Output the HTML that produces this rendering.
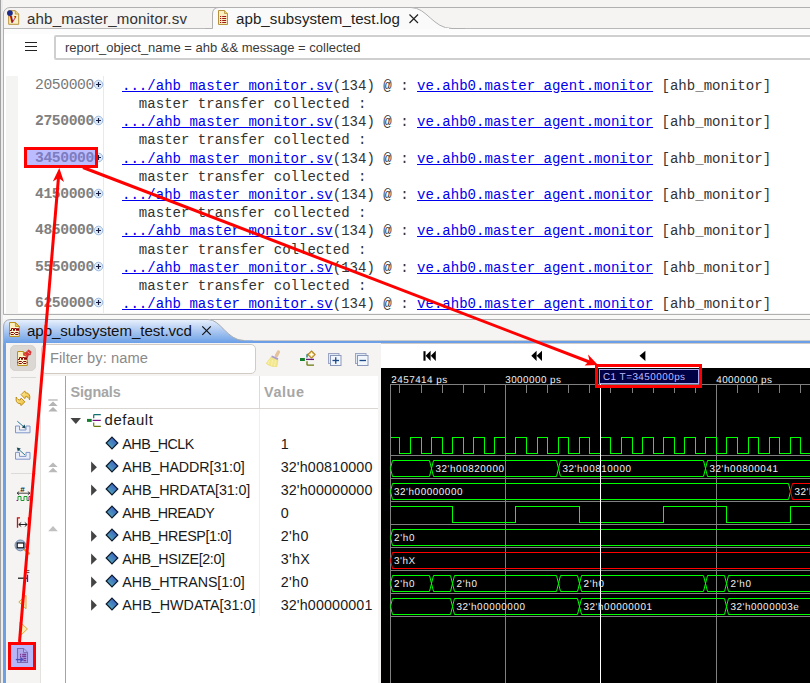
<!DOCTYPE html><html><head><meta charset="utf-8"><style>
html,body{margin:0;padding:0;}
body{width:810px;height:683px;overflow:hidden;background:#f5f4f2;font-family:"Liberation Sans", sans-serif;position:relative;}
.abs{position:absolute;}
.t{position:absolute;white-space:pre;line-height:1;}
.log{position:absolute;white-space:pre;font-family:"Liberation Mono", monospace;font-size:14.05px;line-height:18px;color:#333;}
.log u{color:#0000ee;text-decoration:underline;text-underline-offset:1px;}
.ts{position:absolute;white-space:pre;font-family:"Liberation Mono", monospace;font-size:14.7px;letter-spacing:-0.39px;font-weight:bold;color:#808080;line-height:18px;}
.sig{position:absolute;white-space:pre;font-size:14.6px;color:#1a1a1a;line-height:1;}
</style></head><body><div class="abs" style="left:0;top:0;width:1px;height:683px;background:#a2a2a2"></div>
<div class="abs" style="left:1px;top:0;width:2px;height:683px;background:#ececec"></div>
<div class="abs" style="left:3px;top:7px;width:820px;height:308px;border:1px solid #b0b0b0;border-radius:7px 0 0 0;background:#f5f4f2;box-sizing:border-box"></div>
<div class="abs" style="left:4px;top:29px;width:806px;height:284px;background:#fff"></div>
<div class="abs" style="left:4px;top:28px;width:806px;height:1px;background:#b9b9b9"></div>
<svg class="abs" style="left:205px;top:6px" width="260" height="24" viewBox="0 0 260 24">
<path d="M7.5 23.5 L7.5 8 Q7.5 1.5 14 1.5 L206 1.5 C222 1.5 228 22.5 247 22.5 L260 22.5 L260 24 L7.5 24 Z" fill="#fafafa"/>
<path d="M0 22.5 L7.5 22.5 L7.5 8 Q7.5 1.5 14 1.5 L206 1.5 C222 1.5 228 22.5 247 22.5 L260 22.5" fill="none" stroke="#b0b0b0" stroke-width="1"/>
</svg>
<div class="abs" style="left:213px;top:28px;width:236px;height:1px;background:#fafafa"></div>
<div class="abs" style="left:4px;top:29px;width:806px;height:5px;background:#fcfcfc"></div>
<div class="t" style="left:27px;top:10.5px;font-size:15.1px;letter-spacing:0.152px;color:#333;font-weight:normal;">ahb_master_monitor.sv</div>
<div class="t" style="left:236px;top:10.5px;font-size:15.1px;letter-spacing:0.055px;color:#222;font-weight:normal;">apb_subsystem_test.log</div>
<svg class="abs" style="left:408px;top:13px" width="12" height="12"><path d="M1.5 1.5 L10 10 M10 1.5 L1.5 10" stroke="#222" stroke-width="1.2" fill="none"/></svg>
<svg class="abs" style="left:6px;top:9px" width="16" height="18" viewBox="0 0 16 18">
<path d="M2.7 1.7 L9.3 1.7 L12.7 5.1 L12.7 15.3 L2.7 15.3 Z" fill="#fbf0c4" stroke="#b8923a" stroke-width="1"/>
<path d="M9.3 1.7 L9.3 5.1 L12.7 5.1" fill="#e8d28a" stroke="#b8923a" stroke-width="0.8"/>
<text x="3.4" y="13.6" font-family="Liberation Serif" font-style="italic" font-weight="bold" font-size="14.5" fill="#a01010">v</text>
<circle cx="3.9" cy="4.1" r="2.9" fill="#1c2a8c"/>
</svg>
<svg class="abs" style="left:215px;top:9px" width="16" height="18" viewBox="0 0 16 18">
<path d="M3.5 1.5 L9.5 1.5 L12.5 4.5 L12.5 15.5 L3.5 15.5 Z" fill="#fbf0c4" stroke="#b8923a" stroke-width="1"/>
<path d="M9.5 1.5 L9.5 4.5 L12.5 4.5" fill="#e8d28a" stroke="#b8923a" stroke-width="0.8"/>
<path d="M5 7.5h1.2M7.2 7.5h4M5 9.5h1.2M7.2 9.5h4M5 11.5h1.2M7.2 11.5h4M5 13.5h1.2M7.2 13.5h4" stroke="#a01818" stroke-width="1.1"/>
</svg>
<div class="abs" style="left:25px;top:42px;width:12px;height:1.4px;background:#222"></div>
<div class="abs" style="left:25px;top:46px;width:12px;height:1.4px;background:#222"></div>
<div class="abs" style="left:25px;top:50px;width:12px;height:1.4px;background:#222"></div>
<div class="abs" style="left:53.8px;top:34.7px;width:780px;height:25.4px;border:2px solid #cfcfcf;border-radius:2px;background:#fff;box-sizing:border-box"></div>
<div class="t" style="left:65px;top:41px;font-size:13px;color:#3a3a3a">report_object_name = ahb &amp;&amp; message = collected</div>
<div class="abs" style="left:5.5px;top:76px;width:12.5px;height:237px;background:#f4f4f2"></div>
<div class="abs" style="left:103px;top:76px;width:1px;height:237px;background:#e9e9e9"></div>
<div class="ts" style="left:35px;top:75.80px;font-weight:normal;color:#787878">2050000</div>
<svg class="abs" style="left:93px;top:79px" width="11" height="11"><circle cx="5.5" cy="5.5" r="4.3" fill="#deeaf8" stroke="#9dbbe0" stroke-width="1"/><path d="M3 5.5h5M5.5 3v5" stroke="#141c40" stroke-width="1.15"/></svg>
<div class="log" style="left:122px;top:76.70px"><u>.../ahb_master_monitor.sv</u>(134) @ : <u>ve.ahb0.master_agent.monitor</u> [ahb_monitor]</div>
<div class="log" style="left:122px;top:94.90px">  master transfer collected :</div>
<div class="ts" style="left:35px;top:112.20px">2750000</div>
<svg class="abs" style="left:93px;top:115px" width="11" height="11"><circle cx="5.5" cy="5.5" r="4.3" fill="#deeaf8" stroke="#9dbbe0" stroke-width="1"/><path d="M3 5.5h5M5.5 3v5" stroke="#141c40" stroke-width="1.15"/></svg>
<div class="log" style="left:122px;top:113.10px"><u>.../ahb_master_monitor.sv</u>(134) @ : <u>ve.ahb0.master_agent.monitor</u> [ahb_monitor]</div>
<div class="log" style="left:122px;top:131.30px">  master transfer collected :</div>
<div class="ts" style="left:35px;top:148.60px">3450000</div>
<svg class="abs" style="left:93px;top:152px" width="11" height="11"><circle cx="5.5" cy="5.5" r="4.3" fill="#deeaf8" stroke="#9dbbe0" stroke-width="1"/><path d="M3 5.5h5M5.5 3v5" stroke="#141c40" stroke-width="1.15"/></svg>
<div class="log" style="left:122px;top:149.50px"><u>.../ahb_master_monitor.sv</u>(134) @ : <u>ve.ahb0.master_agent.monitor</u> [ahb_monitor]</div>
<div class="log" style="left:122px;top:167.70px">  master transfer collected :</div>
<div class="ts" style="left:35px;top:185.00px">4150000</div>
<svg class="abs" style="left:93px;top:188px" width="11" height="11"><circle cx="5.5" cy="5.5" r="4.3" fill="#deeaf8" stroke="#9dbbe0" stroke-width="1"/><path d="M3 5.5h5M5.5 3v5" stroke="#141c40" stroke-width="1.15"/></svg>
<div class="log" style="left:122px;top:185.90px"><u>.../ahb_master_monitor.sv</u>(134) @ : <u>ve.ahb0.master_agent.monitor</u> [ahb_monitor]</div>
<div class="log" style="left:122px;top:204.10px">  master transfer collected :</div>
<div class="ts" style="left:35px;top:221.40px">4850000</div>
<svg class="abs" style="left:93px;top:225px" width="11" height="11"><circle cx="5.5" cy="5.5" r="4.3" fill="#deeaf8" stroke="#9dbbe0" stroke-width="1"/><path d="M3 5.5h5M5.5 3v5" stroke="#141c40" stroke-width="1.15"/></svg>
<div class="log" style="left:122px;top:222.30px"><u>.../ahb_master_monitor.sv</u>(134) @ : <u>ve.ahb0.master_agent.monitor</u> [ahb_monitor]</div>
<div class="log" style="left:122px;top:240.50px">  master transfer collected :</div>
<div class="ts" style="left:35px;top:257.80px">5550000</div>
<svg class="abs" style="left:93px;top:261px" width="11" height="11"><circle cx="5.5" cy="5.5" r="4.3" fill="#deeaf8" stroke="#9dbbe0" stroke-width="1"/><path d="M3 5.5h5M5.5 3v5" stroke="#141c40" stroke-width="1.15"/></svg>
<div class="log" style="left:122px;top:258.70px"><u>.../ahb_master_monitor.sv</u>(134) @ : <u>ve.ahb0.master_agent.monitor</u> [ahb_monitor]</div>
<div class="log" style="left:122px;top:276.90px">  master transfer collected :</div>
<div class="ts" style="left:35px;top:294.20px">6250000</div>
<svg class="abs" style="left:93px;top:297px" width="11" height="11"><circle cx="5.5" cy="5.5" r="4.3" fill="#deeaf8" stroke="#9dbbe0" stroke-width="1"/><path d="M3 5.5h5M5.5 3v5" stroke="#141c40" stroke-width="1.15"/></svg>
<div class="log" style="left:122px;top:295.10px"><u>.../ahb_master_monitor.sv</u>(134) @ : <u>ve.ahb0.master_agent.monitor</u> [ahb_monitor]</div>
<div class="abs" style="left:3px;top:315px;width:820px;height:4px;background:#f9f9f8"></div><div class="abs" style="left:210px;top:319px;width:620px;height:1px;background:#b0b0b0"></div>
<div class="abs" style="left:3px;top:326px;width:3px;height:360px;background:linear-gradient(#a9c6ef 0,#6f9fe3 20px,#6f9fe3 100%)"></div>
<div class="abs" style="left:4px;top:340px;width:806px;height:1px;background:#c9c9c9"></div>
<div class="abs" style="left:4px;top:340.9px;width:806px;height:2.4px;background:#6ba0e8"></div>
<svg class="abs" style="left:3px;top:318px" width="250" height="26" viewBox="0 0 250 26">
<defs><linearGradient id="tg" x1="0" y1="0" x2="0" y2="1"><stop offset="0" stop-color="#eaf1fc"/><stop offset="0.35" stop-color="#bcd3f4"/><stop offset="1" stop-color="#6b9fe6"/></linearGradient></defs>
<path d="M0.5 25 L0.5 9 Q0.5 1.5 8 1.5 L205 1.5 C218 1.5 224 22.5 241 22.5 L250 22.5 L250 25 Z" fill="url(#tg)"/>
<path d="M0.5 25 L0.5 9 Q0.5 1.5 8 1.5 L205 1.5 C218 1.5 224 22.5 241 22.5" fill="none" stroke="#a6a9ae" stroke-width="1"/>
</svg>
<div class="t" style="left:27px;top:322.92px;font-size:15.1px;letter-spacing:-0.057px;color:#111;font-weight:normal">apb_subsystem_test.vcd</div>
<svg class="abs" style="left:201px;top:325px" width="12" height="12"><path d="M1.3 1.3 L9.8 9.8 M9.8 1.3 L1.3 9.8" stroke="#111" stroke-width="1.2" fill="none"/></svg>
<div class="abs" style="left:6px;top:343px;width:375px;height:340px;background:#f5f4f2"></div>
<div class="abs" style="left:381px;top:343px;width:429px;height:25px;background:#fff"></div>
<div class="abs" style="left:10px;top:345px;width:26px;height:26px;border-radius:5px;background:#dbd7d3;border:1px solid #d6d2ce;box-sizing:border-box"></div>
<svg class="abs" style="left:0;top:316px" width="40" height="60" viewBox="0 316 40 60"><g transform="translate(0 0)">
<path d="M9.6 322.6 H15.4 L19.3 326.5 V336.4 H9.6 Z" fill="#fffbd2" stroke="#b8860b" stroke-width="1"/>
<path d="M10.6 323.6 H14.4 V327.2 H10.6 Z" fill="#fdeec0"/>
<path d="M15.4 322.6 V326.5 H19.3 Z" fill="#e8c860" stroke="#b8860b" stroke-width="0.8"/>
<path d="M10 330.5 H11.5 V328.5 H13.5 V330.5 H14.5 V328.5 H16.5 V330.5 H17.5 V328.5 H18.5 V330.5 H19" fill="none" stroke="#8b0000" stroke-width="1"/>
<path d="M10 333.5 L11 332.5 H13.5 L14.5 333.5 L13.5 334.5 H11 Z M14.5 333.5 L15.5 332.5 H18 L19 333.5 L18 334.5 H15.5 Z" fill="none" stroke="#8b0000" stroke-width="1"/>
</g><g transform="translate(8 29)">
<path d="M9.6 322.6 H15.4 L19.3 326.5 V336.4 H9.6 Z" fill="#fffbd2" stroke="#b8860b" stroke-width="1"/>
<path d="M10.6 323.6 H14.4 V327.2 H10.6 Z" fill="#fdeec0"/>
<path d="M15.4 322.6 V326.5 H19.3 Z" fill="#e8c860" stroke="#b8860b" stroke-width="0.8"/>
<path d="M10 330.5 H11.5 V328.5 H13.5 V330.5 H14.5 V328.5 H16.5 V330.5 H17.5 V328.5 H18.5 V330.5 H19" fill="none" stroke="#8b0000" stroke-width="1"/>
<path d="M10 333.5 L11 332.5 H13.5 L14.5 333.5 L13.5 334.5 H11 Z M14.5 333.5 L15.5 332.5 H18 L19 333.5 L18 334.5 H15.5 Z" fill="none" stroke="#8b0000" stroke-width="1"/>
</g><path d="M23.3 354 L27.4 357.8 L28.5 354.9 L30.3 355 L31.2 351.7 L28.5 349.8 L26.7 351.7 Z" fill="#dc3434" stroke="#c02020" stroke-width="0.5"/>
<path d="M27.6 351.8 L29.8 353.6" stroke="#f6a0a0" stroke-width="0.9"/><path d="M24.6 354 L26.6 355.8" stroke="#f08080" stroke-width="0.8"/></svg>
<div class="abs" style="left:41px;top:344px;width:215px;height:30px;border:1px solid #d2cbc4;border-radius:5px;background:#fff;box-sizing:border-box"></div>
<div class="t" style="left:50px;top:351.16px;font-size:14.7px;letter-spacing:0.056px;color:#8a8a8a;font-weight:normal">Filter by: name</div>
<div class="abs" style="left:11px;top:377px;width:25px;height:1px;background:#dcdad7"></div>
<div class="abs" style="left:11px;top:473px;width:25px;height:1px;background:#dcdad7"></div>
<div class="abs" style="left:41px;top:376px;width:337px;height:307px;background:#fff"></div><div class="abs" style="left:40px;top:376px;width:1px;height:307px;background:#e4e2df"></div>
<div class="abs" style="left:65px;top:376px;width:1px;height:307px;background:#a4a4a4"></div>
<div class="abs" style="left:259px;top:376px;width:1px;height:33px;background:#dcdcdc"></div>
<div class="abs" style="left:259px;top:409px;width:1px;height:207px;background:#efefef"></div>
<div class="abs" style="left:66px;top:408px;width:312px;height:1px;background:#dad6d2"></div>

<div class="t" style="left:70.5px;top:385.31px;font-size:14.4px;letter-spacing:-0.169px;color:#a6a6a6;font-weight:bold">Signals</div>
<div class="t" style="left:264px;top:385.31px;font-size:14.4px;letter-spacing:0.594px;color:#a6a6a6;font-weight:bold">Value</div>
<svg class="abs" style="left:46px;top:398.4px" width="14" height="16" viewBox="0 0 14 16">
<path d="M2.3 2 h9.4" stroke="#b4b4b4" stroke-width="1.3"/><path d="M7 3.5 L11.7 8 L2.3 8 Z M7 9 L11.7 13.5 L2.3 13.5 Z" fill="#b4b4b4"/></svg>
<svg class="abs" style="left:46px;top:461.3px" width="14" height="14" viewBox="0 0 14 14">
<path d="M7 1.5 L11.7 6 L2.3 6 Z M7 6.8 L11.7 11.3 L2.3 11.3 Z" fill="#bababa"/></svg>
<svg class="abs" style="left:46px;top:524px" width="14" height="10" viewBox="0 0 14 10">
<path d="M7 2 L11.8 7.2 L2.2 7.2 Z" fill="#c0c0c0"/></svg>
<svg class="abs" style="left:70px;top:417px" width="12" height="8"><path d="M0.5 1 L11 1 L5.8 7 Z" fill="#444"/></svg>
<svg class="abs" style="left:86px;top:412px" width="17" height="16" viewBox="86 412 17 16">
<rect x="87" y="418.9" width="4.7" height="3" fill="#14802e"/>
<path d="M100.8 414.7 H94.5 Q93.7 414.7 93.7 415.5 V418.3" fill="none" stroke="#107070" stroke-width="1.2"/>
<path d="M92.6 420.4 H100.8" fill="none" stroke="#7a1080" stroke-width="1.2"/>
<path d="M93.7 422.4 V425.6 Q93.7 426.4 94.5 426.4 H100.8" fill="none" stroke="#687808" stroke-width="1.2"/>
</svg>
<div class="t" style="left:104.5px;top:413.39px;font-size:14.9px;letter-spacing:0.611px;color:#1a1a1a;font-weight:normal">default</div>
<svg width="0" height="0" style="position:absolute"><defs><linearGradient id="dg" x1="1" y1="0" x2="0" y2="1"><stop offset="0.2" stop-color="#3c62c4"/><stop offset="0.85" stop-color="#52aab8"/></linearGradient></defs></svg>
<svg class="abs" style="left:105px;top:436px" width="14" height="14" viewBox="0 0 14 14"><path d="M7 1.2 L12.8 7 L7 12.8 L1.2 7 Z" fill="url(#dg)" stroke="#0c1a2c" stroke-width="1.2"/></svg>
<div class="t" style="left:122.3px;top:436.5px;font-size:14.3px;letter-spacing:-0.500px;color:#1a1a1a;font-weight:normal">AHB_HCLK</div>
<div class="sig" style="left:280.7px;top:436.50px;font-size:14.3px">1</div>
<svg class="abs" style="left:90px;top:461px" width="8" height="13"><path d="M1.1 0.6 L6.9 6.2 L1.1 11.8 Z" fill="#444"/></svg>
<svg class="abs" style="left:105px;top:459px" width="14" height="14" viewBox="0 0 14 14"><path d="M7 1.2 L12.8 7 L7 12.8 L1.2 7 Z" fill="url(#dg)" stroke="#0c1a2c" stroke-width="1.2"/></svg>
<div class="t" style="left:122.3px;top:459.5px;font-size:14.3px;letter-spacing:-0.106px;color:#1a1a1a;font-weight:normal">AHB_HADDR[31:0]</div>
<div class="t" style="left:280.7px;top:459.5px;font-size:14.3px;letter-spacing:0.135px;color:#1a1a1a;font-weight:normal">32'h00810000</div>
<svg class="abs" style="left:90px;top:484px" width="8" height="13"><path d="M1.1 0.6 L6.9 6.2 L1.1 11.8 Z" fill="#444"/></svg>
<svg class="abs" style="left:105px;top:482px" width="14" height="14" viewBox="0 0 14 14"><path d="M7 1.2 L12.8 7 L7 12.8 L1.2 7 Z" fill="url(#dg)" stroke="#0c1a2c" stroke-width="1.2"/></svg>
<div class="t" style="left:122.3px;top:482.5px;font-size:14.3px;letter-spacing:-0.120px;color:#1a1a1a;font-weight:normal">AHB_HRDATA[31:0]</div>
<div class="t" style="left:280.7px;top:482.5px;font-size:14.3px;letter-spacing:0.135px;color:#1a1a1a;font-weight:normal">32'h00000000</div>
<svg class="abs" style="left:105px;top:505px" width="14" height="14" viewBox="0 0 14 14"><path d="M7 1.2 L12.8 7 L7 12.8 L1.2 7 Z" fill="url(#dg)" stroke="#0c1a2c" stroke-width="1.2"/></svg>
<div class="t" style="left:122.3px;top:505.5px;font-size:14.3px;letter-spacing:-0.495px;color:#1a1a1a;font-weight:normal">AHB_HREADY</div>
<div class="sig" style="left:280.7px;top:505.50px;font-size:14.3px">0</div>
<svg class="abs" style="left:90px;top:530px" width="8" height="13"><path d="M1.1 0.6 L6.9 6.2 L1.1 11.8 Z" fill="#444"/></svg>
<svg class="abs" style="left:105px;top:528px" width="14" height="14" viewBox="0 0 14 14"><path d="M7 1.2 L12.8 7 L7 12.8 L1.2 7 Z" fill="url(#dg)" stroke="#0c1a2c" stroke-width="1.2"/></svg>
<div class="t" style="left:122.3px;top:528.5px;font-size:14.3px;letter-spacing:-0.381px;color:#1a1a1a;font-weight:normal">AHB_HRESP[1:0]</div>
<div class="t" style="left:280.7px;top:528.5px;font-size:14.3px;letter-spacing:0.370px;color:#1a1a1a;font-weight:normal">2'h0</div>
<svg class="abs" style="left:90px;top:553px" width="8" height="13"><path d="M1.1 0.6 L6.9 6.2 L1.1 11.8 Z" fill="#444"/></svg>
<svg class="abs" style="left:105px;top:551px" width="14" height="14" viewBox="0 0 14 14"><path d="M7 1.2 L12.8 7 L7 12.8 L1.2 7 Z" fill="url(#dg)" stroke="#0c1a2c" stroke-width="1.2"/></svg>
<div class="t" style="left:122.3px;top:551.5px;font-size:14.3px;letter-spacing:-0.346px;color:#1a1a1a;font-weight:normal">AHB_HSIZE[2:0]</div>
<div class="t" style="left:280.7px;top:551.5px;font-size:14.3px;letter-spacing:0.342px;color:#1a1a1a;font-weight:normal">3'hX</div>
<svg class="abs" style="left:90px;top:576px" width="8" height="13"><path d="M1.1 0.6 L6.9 6.2 L1.1 11.8 Z" fill="#444"/></svg>
<svg class="abs" style="left:105px;top:574px" width="14" height="14" viewBox="0 0 14 14"><path d="M7 1.2 L12.8 7 L7 12.8 L1.2 7 Z" fill="url(#dg)" stroke="#0c1a2c" stroke-width="1.2"/></svg>
<div class="t" style="left:122.3px;top:574.5px;font-size:14.3px;letter-spacing:-0.105px;color:#1a1a1a;font-weight:normal">AHB_HTRANS[1:0]</div>
<div class="t" style="left:280.7px;top:574.5px;font-size:14.3px;letter-spacing:0.370px;color:#1a1a1a;font-weight:normal">2'h0</div>
<svg class="abs" style="left:90px;top:599px" width="8" height="13"><path d="M1.1 0.6 L6.9 6.2 L1.1 11.8 Z" fill="#444"/></svg>
<svg class="abs" style="left:105px;top:597px" width="14" height="14" viewBox="0 0 14 14"><path d="M7 1.2 L12.8 7 L7 12.8 L1.2 7 Z" fill="url(#dg)" stroke="#0c1a2c" stroke-width="1.2"/></svg>
<div class="t" style="left:122.3px;top:597.5px;font-size:14.3px;letter-spacing:0.015px;color:#1a1a1a;font-weight:normal">AHB_HWDATA[31:0]</div>
<div class="t" style="left:280.7px;top:597.5px;font-size:14.3px;letter-spacing:0.135px;color:#1a1a1a;font-weight:normal">32'h00000001</div>
<svg class="abs" style="left:0;top:340px" width="381" height="343" viewBox="0 340 381 343">
<path d="M278.4 351.9 L276.4 355.8" stroke="#e4c29a" stroke-width="3.3" stroke-linecap="round"/>
<path d="M271.2 357 L277.9 359.9 L276.9 366.5 Q270.5 367 266.2 363.4 Z" fill="#f3e78e" stroke="#ead86a" stroke-width="0.6"/>
<path d="M269.5 360.5 L268 364 M272.5 360 L271.6 365.6 M275.3 360.5 L274.6 366.2" stroke="#fbf4b8" stroke-width="0.8" fill="none"/>
<path d="M271.6 356.3 L278 359.1" stroke="#ab9ccc" stroke-width="1.7"/>
<rect x="300" y="358" width="4.9" height="3" fill="#14802e"/>
<path d="M307 357.4 V355.2 Q307 354.4 307.8 354.4 H309" fill="none" stroke="#107070" stroke-width="1.3"/>
<path d="M306 359.4 H314" stroke="#641a78" stroke-width="1.3"/>
<path d="M307 361.2 V364.4 Q307 365.2 307.8 365.2 H314" fill="none" stroke="#687808" stroke-width="1.3"/>
<path d="M311.5 351 L315.1 354.6 L311.5 358.2 L307.9 354.6 Z" fill="#f4dc98" stroke="#b48a28" stroke-width="1.1"/>
<path d="M309.7 354.6 H313.3 M311.5 352.8 V356.4" stroke="#fffdf0" stroke-width="1"/>
<rect x="328.5" y="353.5" width="10.5" height="10" fill="#dfe9f6" stroke="#9aa6c4" stroke-width="1"/>
<rect x="330.5" y="355.5" width="10.5" height="10" fill="#f1f6fc" stroke="#8c98ba" stroke-width="1"/>
<path d="M332.5 360.5 H339" stroke="#1c4a88" stroke-width="1.3"/>
<path d="M335.75 357.2 V363.8" stroke="#1c4a88" stroke-width="1.3"/>
<rect x="355.5" y="353.5" width="10.5" height="10" fill="#dfe9f6" stroke="#9aa6c4" stroke-width="1"/>
<rect x="357.5" y="355.5" width="10.5" height="10" fill="#f1f6fc" stroke="#8c98ba" stroke-width="1"/>
<path d="M359.5 360.5 H366" stroke="#1c4a88" stroke-width="1.3"/>
<defs><linearGradient id="gold" x1="0" y1="0" x2="1" y2="1"><stop offset="0" stop-color="#fff0a8"/><stop offset="1" stop-color="#eab428"/></linearGradient></defs>
<path d="M21.1 394.6 L24.8 390.9 L25.4 392.8 C27.8 392.6 29.6 394.2 29.8 396.5 L29.6 399.9 C28.8 397.6 27.5 396.6 25.6 396.6 L24.8 398.6 Z" fill="url(#gold)" stroke="#b8860b" stroke-width="0.9" stroke-linejoin="round"/>
<path d="M24.9 401.8 L21.1 405.6 L20.5 403.7 C18.1 403.9 16.3 402.3 16.1 400 L16.2 397 C17.1 399.3 18.4 400.1 20.3 400 L21.1 398.1 Z" fill="url(#gold)" stroke="#b8860b" stroke-width="0.9" stroke-linejoin="round"/>
<path d="M15.5 426.0 H19.5 V430.0 H26 V426.0 H30 V432.8 H15.5 Z" fill="#e9eef9" stroke="#8096c8" stroke-width="1"/>
<path d="M17.3 421.2 L24 427" stroke="#2a7a9a" stroke-width="1"/><path d="M25.6 428.4 L21.8 427.6 L24.6 424.6 Z" fill="#1a4a5a"/>
<path d="M15.5 452.4 H19.5 V456.4 H26 V452.4 H30 V459.2 H15.5 Z" fill="#e9eef9" stroke="#8096c8" stroke-width="1"/>
<path d="M25 455 L18.5 449.2" stroke="#2a7a9a" stroke-width="1"/><path d="M16.8 447.6 L20.8 448.4 L17.8 451.4 Z" fill="#1a4a5a"/>
<text x="20.2" y="492" font-family="Liberation Sans" font-size="8" font-weight="bold" fill="#222">#</text>
<path d="M17 493.2 H30 M17 493.2 l2.2 -1.6 M17 493.2 l2.2 1.6 M30 493.2 l-2.2 -1.6 M30 493.2 l-2.2 1.6" stroke="#333" stroke-width="0.9" fill="none"/>
<path d="M16.5 500.5 H18" stroke="#8a1a8a" stroke-width="1" fill="none"/>
<path d="M18 500.5 V496.5 H21 V500.5 H24 V496.5 H27 V500.5 H29" stroke="#1a9a2a" stroke-width="1" fill="none"/>
<path d="M29 500.5 V496.5 H30.5" stroke="#8a1a8a" stroke-width="1" fill="none"/>
<path d="M17.5 517.3 V527.8 M17.5 517.8 H20" stroke="#cc1010" stroke-width="1.3" fill="none"/>
<path d="M28.5 517.3 V527.8" stroke="#cc1010" stroke-width="1.3" fill="none"/>
<path d="M18.8 524.5 H27.2 M18.8 524.5 l2.4 -2 M18.8 524.5 l2.4 2 M27.2 524.5 l-2.4 -2 M27.2 524.5 l-2.4 2" stroke="#222" stroke-width="1" fill="none"/>
<path d="M24.5 549.5 L29 553.6" stroke="#e0a030" stroke-width="2.2" stroke-linecap="round"/>
<circle cx="20.4" cy="545.4" r="5.4" fill="#a9c0dc" stroke="#6f88ac" stroke-width="1"/>
<rect x="17.2" y="543" width="6.6" height="4.8" fill="#fff" stroke="#111" stroke-width="1.2"/>
<path d="M18 578.2 H27" stroke="#111" stroke-width="1.2"/>
<path d="M27.5 574.6 V582" stroke="#4020c0" stroke-width="1.3"/>
<path d="M26 570.6 H29.4 M26 572.6 H29.4" stroke="#222" stroke-width="0.8"/>
<path d="M26 595.4 V608.8 L18.8 602 Z" fill="#fbeeb0" stroke="#dca840" stroke-width="1"/>
<path d="M20 622 L27.4 629 L20 636 Z" fill="#fbeeb0" stroke="#dca840" stroke-width="1"/>
<path d="M17.5 648.5 H23.5 L27.5 652.5 V662.5 H17.5 Z" fill="#e6dad8" stroke="#7c5c5c" stroke-width="1.1"/>
<path d="M23.5 648.5 V652.5 H27.5" fill="#f4ecec" stroke="#7c5c5c" stroke-width="0.9"/>
<path d="M20 654.5 h1.2 M22.2 654.5 h4 M20 656.5 h1.2 M22.2 656.5 h4 M23.4 658.6 h2.8 M23.4 660.6 h2.8" stroke="#7a0030" stroke-width="1.4"/>
<path d="M15.8 659.6 H21" stroke="#20206a" stroke-width="1.3"/><path d="M23.8 659.6 L20.4 656.8 V662.4 Z" fill="#20206a"/>
</svg>
<svg class="abs" style="left:381px;top:368px" width="429" height="315" viewBox="381 368 429 315" shape-rendering="crispEdges">
<rect x="381" y="368" width="429" height="315" fill="#000"/>
<path d="M390.0 384.5 H812" stroke="#808080" stroke-width="1" fill="none"/>
<path d="M399.5 385 V393 M421.5 385 V393 M442.5 385 V393 M463.5 385 V393 M484.5 385 V393 M526.5 385 V393 M547.5 385 V393 M568.5 385 V393 M589.5 385 V393 M610.5 385 V393 M632.5 385 V393 M653.5 385 V393 M674.5 385 V393 M695.5 385 V393 M737.5 385 V393 M758.5 385 V393 M779.5 385 V393 M800.5 385 V393 " stroke="#808080" stroke-width="1" fill="none"/>
<path d="M390.5 384 V683" stroke="#808080" stroke-width="1" fill="none"/>
<path d="M505.5 384 V683" stroke="#808080" stroke-width="1" fill="none"/>
<path d="M716.5 384 V683" stroke="#808080" stroke-width="1" fill="none"/>
<path d="M390.5 455.5 H812 M390.5 478.5 H812 M390.5 501.5 H812 M390.5 524.5 H812 M390.5 547.5 H812 M390.5 570.5 H812 M390.5 593.5 H812 M390.5 616.5 H812 " stroke="#808080" stroke-width="1" fill="none"/>
<path d="M390.5 437.5 H399.5 V453.5 H410.5 V437.5 H421.5 V453.5 H431.5 V437.5 H442.5 V453.5 H452.5 V437.5 H463.5 V453.5 H473.5 V437.5 H484.5 V453.5 H494.5 V437.5 H505.5 V453.5 H515.5 V437.5 H526.5 V453.5 H537.5 V437.5 H547.5 V453.5 H558.5 V437.5 H568.5 V453.5 H579.5 V437.5 H589.5 V453.5 H600.5 V437.5 H610.5 V453.5 H621.5 V437.5 H632.5 V453.5 H642.5 V437.5 H653.5 V453.5 H663.5 V437.5 H674.5 V453.5 H684.5 V437.5 H695.5 V453.5 H705.5 V437.5 H716.5 V453.5 H726.5 V437.5 H737.5 V453.5 H748.5 V437.5 H758.5 V453.5 H769.5 V437.5 H779.5 V453.5 H790.5 V437.5 H800.5 V453.5 H811.5 V437.5 H815" stroke="#00ff00" stroke-width="1" fill="none"/>
<path d="M390.5 506.5 H452.5 V522.5 H515.5 V506.5 H579.5 V522.5 H663.5 V506.5 H726.5 V522.5 H790.5 V506.5 H815" stroke="#00ff00" stroke-width="1" fill="none"/>
</svg>
<svg class="abs" style="left:381px;top:368px" width="429" height="315" viewBox="381 368 429 315">
<path d="M392.5 460.5 L390.5 468.5 L392.5 476.5 M392.5 460.5 H429.5 L431.5 468.5 L429.5 476.5 H392.5" stroke="#00ff00" stroke-width="1" fill="none"/>
<path d="M431.5 468.5 L433.5 460.5 H556.5 L558.5 468.5 L556.5 476.5 H433.5 Z" stroke="#00ff00" stroke-width="1" fill="none"/>
<path d="M558.5 468.5 L560.5 460.5 H703.5 L705.5 468.5 L703.5 476.5 H560.5 Z" stroke="#00ff00" stroke-width="1" fill="none"/>
<path d="M705.5 468.5 L707.5 460.5 H828 L830 468.5 L828 476.5 H707.5 Z" stroke="#00ff00" stroke-width="1" fill="none"/>
<path d="M392.5 483.5 L390.5 491.5 L392.5 499.5 M392.5 483.5 H788.5 L790.5 491.5 L788.5 499.5 H392.5" stroke="#00ff00" stroke-width="1" fill="none"/>
<path d="M790.5 491.5 L792.5 483.5 H828 L830 491.5 L828 499.5 H792.5 Z" stroke="#ff0000" stroke-width="1" fill="none"/>
<path d="M392.5 529.5 L390.5 537.5 L392.5 545.5 M392.5 529.5 H828 L830 537.5 L828 545.5 H392.5" stroke="#00ff00" stroke-width="1" fill="none"/>
<path d="M392.5 552.5 L390.5 560.5 L392.5 568.5 M392.5 552.5 H828 L830 560.5 L828 568.5 H392.5" stroke="#ff0000" stroke-width="1" fill="none"/>
<path d="M392.5 575.5 L390.5 583.5 L392.5 591.5 M392.5 575.5 H429.5 L431.5 583.5 L429.5 591.5 H392.5" stroke="#00ff00" stroke-width="1" fill="none"/>
<path d="M431.5 583.5 L433.5 575.5 H450.5 L452.5 583.5 L450.5 591.5 H433.5 Z" stroke="#00ff00" stroke-width="1" fill="none"/>
<path d="M452.5 583.5 L454.5 575.5 H556.5 L558.5 583.5 L556.5 591.5 H454.5 Z" stroke="#00ff00" stroke-width="1" fill="none"/>
<path d="M558.5 583.5 L560.5 575.5 H577.5 L579.5 583.5 L577.5 591.5 H560.5 Z" stroke="#00ff00" stroke-width="1" fill="none"/>
<path d="M579.5 583.5 L581.5 575.5 H703.5 L705.5 583.5 L703.5 591.5 H581.5 Z" stroke="#00ff00" stroke-width="1" fill="none"/>
<path d="M705.5 583.5 L707.5 575.5 H724.5 L726.5 583.5 L724.5 591.5 H707.5 Z" stroke="#00ff00" stroke-width="1" fill="none"/>
<path d="M726.5 583.5 L728.5 575.5 H828 L830 583.5 L828 591.5 H728.5 Z" stroke="#00ff00" stroke-width="1" fill="none"/>
<path d="M392.5 598.5 L390.5 606.5 L392.5 614.5 M392.5 598.5 H450.5 L452.5 606.5 L450.5 614.5 H392.5" stroke="#00ff00" stroke-width="1" fill="none"/>
<path d="M452.5 606.5 L454.5 598.5 H577.5 L579.5 606.5 L577.5 614.5 H454.5 Z" stroke="#00ff00" stroke-width="1" fill="none"/>
<path d="M579.5 606.5 L581.5 598.5 H724.5 L726.5 606.5 L724.5 614.5 H581.5 Z" stroke="#00ff00" stroke-width="1" fill="none"/>
<path d="M726.5 606.5 L728.5 598.5 H828 L830 606.5 L828 614.5 H728.5 Z" stroke="#00ff00" stroke-width="1" fill="none"/>
<path d="M600.5 384 V683" stroke="#ffffff" stroke-width="1" fill="none" shape-rendering="crispEdges"/>
<text x="435.5" y="471.7" textLength="68.47" font-family="Liberation Sans" font-size="9.9" text-rendering="geometricPrecision" fill="#f0f0f0" lengthAdjust="spacing">32'h00820000</text>
<text x="562.5" y="471.7" textLength="68.47" font-family="Liberation Sans" font-size="9.9" text-rendering="geometricPrecision" fill="#f0f0f0" lengthAdjust="spacing">32'h00810000</text>
<text x="709.5" y="471.7" textLength="68.47" font-family="Liberation Sans" font-size="9.9" text-rendering="geometricPrecision" fill="#f0f0f0" lengthAdjust="spacing">32'h00800041</text>
<text x="394.0" y="494.7" textLength="68.47" font-family="Liberation Sans" font-size="9.9" text-rendering="geometricPrecision" fill="#f0f0f0" lengthAdjust="spacing">32'h00000000</text>
<text x="794.5" y="494.7" textLength="68.47" font-family="Liberation Sans" font-size="9.9" text-rendering="geometricPrecision" fill="#f0f0f0" lengthAdjust="spacing">32'h00000000</text>
<text x="394.0" y="540.7" textLength="20.55" font-family="Liberation Sans" font-size="9.9" text-rendering="geometricPrecision" fill="#f0f0f0" lengthAdjust="spacing">2'h0</text>
<text x="394.0" y="563.7" textLength="21.01" font-family="Liberation Sans" font-size="9.9" text-rendering="geometricPrecision" fill="#f0f0f0" lengthAdjust="spacing">3'hX</text>
<text x="394.0" y="586.7" textLength="20.55" font-family="Liberation Sans" font-size="9.9" text-rendering="geometricPrecision" fill="#f0f0f0" lengthAdjust="spacing">2'h0</text>
<text x="456.5" y="586.7" textLength="20.55" font-family="Liberation Sans" font-size="9.9" text-rendering="geometricPrecision" fill="#f0f0f0" lengthAdjust="spacing">2'h0</text>
<text x="583.5" y="586.7" textLength="20.55" font-family="Liberation Sans" font-size="9.9" text-rendering="geometricPrecision" fill="#f0f0f0" lengthAdjust="spacing">2'h0</text>
<text x="730.5" y="586.7" textLength="20.55" font-family="Liberation Sans" font-size="9.9" text-rendering="geometricPrecision" fill="#f0f0f0" lengthAdjust="spacing">2'h0</text>
<text x="456.5" y="609.7" textLength="68.47" font-family="Liberation Sans" font-size="9.9" text-rendering="geometricPrecision" fill="#f0f0f0" lengthAdjust="spacing">32'h00000000</text>
<text x="583.5" y="609.7" textLength="68.47" font-family="Liberation Sans" font-size="9.9" text-rendering="geometricPrecision" fill="#f0f0f0" lengthAdjust="spacing">32'h00000001</text>
<text x="730.5" y="609.7" textLength="68.28" font-family="Liberation Sans" font-size="9.9" text-rendering="geometricPrecision" fill="#f0f0f0" lengthAdjust="spacing">32'h0000003e</text>
<text x="391.3" y="382.8" textLength="55.82" font-family="Liberation Sans" font-size="9.9" text-rendering="geometricPrecision" fill="#f0f0f0" lengthAdjust="spacing">2457414 ps</text>
<text x="505.2" y="382.8" textLength="55.82" font-family="Liberation Sans" font-size="9.9" text-rendering="geometricPrecision" fill="#f0f0f0" lengthAdjust="spacing">3000000 ps</text>
<text x="716.2" y="382.8" textLength="55.82" font-family="Liberation Sans" font-size="9.9" text-rendering="geometricPrecision" fill="#f0f0f0" lengthAdjust="spacing">4000000 ps</text>
<rect x="599.5" y="369.5" width="99" height="14" fill="#000044" stroke="#a8a8f0" stroke-width="1" shape-rendering="crispEdges"/>
<text x="603" y="380.3" textLength="82.04" lengthAdjust="spacing" font-family="Liberation Sans" font-size="9.9" text-rendering="geometricPrecision" fill="#bcbcff">C1 T=3450000ps</text>
</svg>
<div class="abs" style="left:381px;top:343px;width:429px;height:1px;background:#d0cbc6"></div>
<svg class="abs" style="left:420.8px;top:349px" width="20" height="14" viewBox="0 0 20 14"><path d="M3.5 2.2 V11.7" stroke="#000" stroke-width="2.1"/><path d="M9.6 1.7 V11.9 L4.6 6.8 Z M14.8 1.7 V11.9 L9.8 6.8 Z" fill="#000"/></svg>
<svg class="abs" style="left:527.8px;top:349px" width="18" height="14" viewBox="0 0 18 14"><path d="M8.6 1.7 V11.9 L3.3 6.8 Z M14 1.7 V11.9 L8.7 6.8 Z" fill="#000"/></svg>
<svg class="abs" style="left:635.8px;top:349px" width="14" height="14" viewBox="0 0 14 14"><path d="M9.4 1.7 V11.9 L3.5 6.8 Z" fill="#000"/></svg>
<svg class="abs" style="left:0;top:0" width="810" height="683" viewBox="0 0 810 683">
<rect x="25.5" y="148.5" width="71" height="18" fill="rgba(120,120,255,0.5)" stroke="#ff0000" stroke-width="3"/>
<rect x="596.5" y="365.5" width="104" height="21" fill="none" stroke="#ff0000" stroke-width="3"/>
<rect x="9.5" y="643.5" width="25" height="25" fill="rgba(120,120,255,0.5)" stroke="#ff0000" stroke-width="3"/>
<path d="M83 167.5 L592 363" stroke="#ff0000" stroke-width="3" fill="none"/>
<path d="M598 365 L584.5 365.5 L589.5 361 L588 354.5 Z" fill="#ff0000"/>
<path d="M19.5 642 L58.6 176" stroke="#ff0000" stroke-width="3" fill="none"/>
<path d="M59.3 168 L64 182 L58.6 178 L52.8 181.5 Z" fill="#ff0000"/>
</svg></body></html>
